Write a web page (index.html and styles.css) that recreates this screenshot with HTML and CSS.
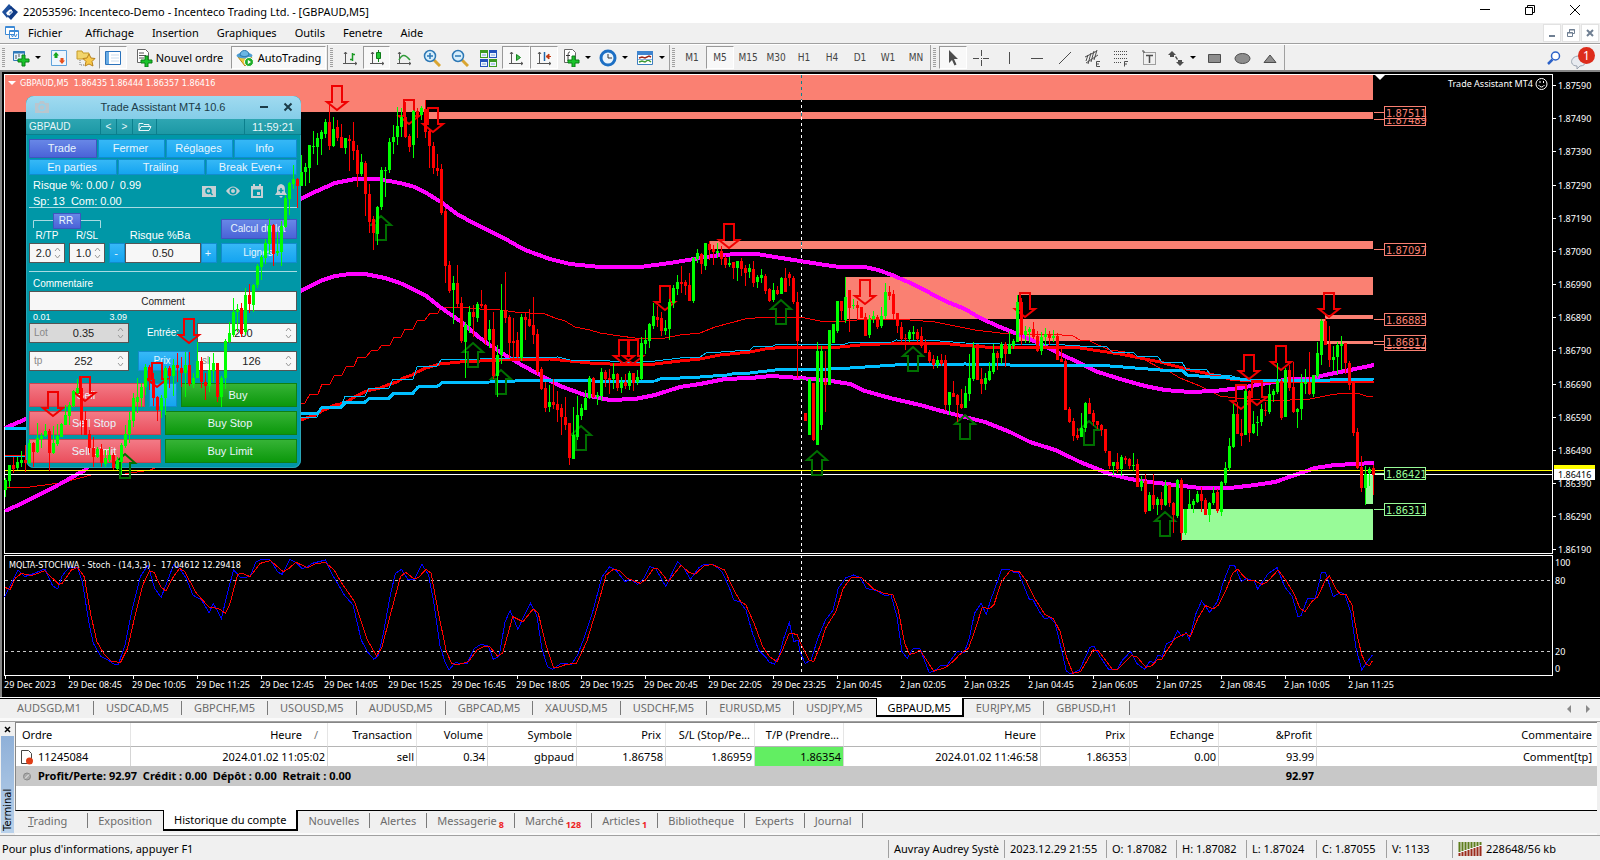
FILE: index.html
```html
<!DOCTYPE html>
<html lang="fr">
<head>
<meta charset="utf-8">
<title>22053596: Incenteco-Demo - Incenteco Trading Ltd. - [GBPAUD,M5]</title>
<link rel="stylesheet" href="styles.css">
</head>
<body>
<header class="titlebar">
  <svg class="app-logo" width="16" height="16" viewBox="0 0 16 16"><path d="M0 8 7 0l3 3-6 6 2 3-1 2z" fill="#1d4f9c"/><path d="M9 2l7 6-7 8-4-4 5-5-3-2z" fill="#0f3a85"/><path d="M5 9l4-4 2 3-4 4z" fill="#fff"/><path d="M7 9l2-2 1 1-2 2z" fill="#5f8cc9"/></svg>
  <h1 class="window-title">22053596: Incenteco-Demo - Incenteco Trading Ltd. - [GBPAUD,M5]</h1>
  <div class="window-controls">
    <button type="button" aria-label="Minimize"><svg width="12" height="12" viewBox="0 0 12 12"><path d="M1 5.500H11" stroke="#000"/></svg></button>
    <button type="button" aria-label="Restore"><svg width="12" height="12" viewBox="0 0 12 12" fill="none" stroke="#000"><path d="M1.500 3.500h7v7h-7zM3.500 3.500v-2h7v7h-2"/></svg></button>
    <button type="button" aria-label="Close"><svg width="12" height="12" viewBox="0 0 12 12" fill="none" stroke="#000"><path d="M1 1l10 10M11 1 1 11"/></svg></button>
  </div>
</header>
<nav class="menubar" aria-label="Menu">
  <svg width="16" height="16" viewBox="0 0 16 16" fill="#fff" stroke="#3d8ad6"><path d="M1.500 1.500h9v8h-9zM5.500 5.500h9v8h-9z"/><path d="M1 2.500h9M5 6.500h9M7 9l1.500 3 1.500-3 1.500 3 1.500-3" fill="none"/></svg>
  <button type="button" class="menu-item first">Fichier</button>
  <button type="button" class="menu-item">Affichage</button>
  <button type="button" class="menu-item">Insertion</button>
  <button type="button" class="menu-item">Graphiques</button>
  <button type="button" class="menu-item">Outils</button>
  <button type="button" class="menu-item">Fenetre</button>
  <button type="button" class="menu-item">Aide</button>
  <div class="mdi-controls">
    <button type="button" aria-label="Minimize chart"><svg width="10" height="10" viewBox="0 0 10 10"><path d="M2 7h6v2H2z" fill="#6f7f92"/></svg></button>
    <button type="button" aria-label="Restore chart"><svg width="10" height="10" viewBox="0 0 10 10" fill="none" stroke="#6f7f92"><path d="M1.500 4.500h5v4h-5zM3.500 4V1.500h5v4H7M3 2h6M1 5h6"/></svg></button>
    <button type="button" aria-label="Close chart"><svg width="10" height="10" viewBox="0 0 10 10"><path d="M2 2l6 6M8 2 2 8" stroke="#6f7f92" stroke-width="2"/></svg></button>
  </div>
</nav>
<div class="toolbar">
  <div class="tool-group">
    <span class="grip"></span>
    <button type="button" class="tool drop" aria-label="New chart"><svg width="18" height="18" viewBox="0 0 18 18"><path d="M1.500 2.500h11v9h-11z" fill="#e4f1fc" stroke="#2f78b8"/><path d="M1 3.500h12" stroke="#2f78b8" stroke-width="2"/><path d="M4 6v4M7 5v3" stroke="#555"/><path d="M10 6h3v4h4v3h-4v4h-3v-4H6v-3h4z" fill="#19c42a" stroke="#0a7d16"/></svg><i class="caret"></i></button>
    <button type="button" class="tool" aria-label="Market watch"><svg width="18" height="18" viewBox="0 0 18 18"><path d="M1.500 1.500h15v15h-15z" fill="#eef6fd" stroke="#5da2dc"/><path d="M6 3l3 3.500H7.500V9h-3V6.500H3z" fill="#14a81e"/><path d="M12 15l-3-3.500h1.500V9h3v2.500H15z" fill="#e8501c"/></svg></button>
    <button type="button" class="tool" aria-label="Navigator"><svg width="20" height="18" viewBox="0 0 20 18"><path d="M1 2h5l1 2h6v6H1z" fill="#f2d56b" stroke="#c59a28"/><path d="M4 11v5h4" fill="none" stroke="#777" stroke-dasharray="1 1"/><path d="M13 5l2 4 4 .5-3 3 1 4.500-4-2-4 2 1-4.500-3-3 4-.5z" fill="#f8c94a" stroke="#b8821d"/></svg></button>
    <button type="button" class="tool wide pressed" aria-label="Terminal"><svg width="18" height="18" viewBox="0 0 18 18"><path d="M1.500 2.500h15v13h-15z" fill="#fff" stroke="#2a72bb"/><path d="M2 3h3v12H2z" fill="#68abe3"/><path d="M7 6h8M7 9h8M7 12h8" stroke="#c9dced"/></svg></button>
    <button type="button" class="tool order"><svg width="18" height="18" viewBox="0 0 18 18"><path d="M2.500.5h8l3 3v10h-11z" fill="#fff" stroke="#666"/><path d="M4 4h5M4 6.500h7M4 9h5" stroke="#555"/><path d="M10 7h3v4h4v3h-4v4h-3v-4H6v-3h4z" fill="#19c42a" stroke="#0a7d16"/></svg>Nouvel ordre</button>
    <button type="button" class="tool auto pressed"><svg width="18" height="18" viewBox="0 0 18 18"><path d="M2 8l7 9 7-9z" fill="#f0c83e" stroke="#b98b16"/><ellipse cx="8.500" cy="6.500" rx="8" ry="3" fill="#4f9ed3"/><path d="M4 6c0-6 9-6 9 0-2 2-7 2-9 0z" fill="#6bb6e4" stroke="#2a75ab"/><circle cx="13" cy="13" r="4.500" fill="#1fae2a" stroke="#fff"/><path d="M11.800 10.800v4.500l3.200-2.300z" fill="#fff"/></svg>AutoTrading</button>
  </div>
  <div class="tool-group charts">
    <span class="grip"></span>
    <button type="button" class="tool" aria-label="Bar chart"><svg width="18" height="18" viewBox="0 0 18 18" fill="none"><path d="M4.500 3v12M2 14.500h14M3 5l1.500-2L6 5M14 13l2 1.500-2 1.500" stroke="#555"/><path d="M11.500 4v8M9 10.500h2M12 5.500h2" stroke="#1b9a25" stroke-width="1.500"/></svg></button>
    <button type="button" class="tool pressed" aria-label="Candlesticks"><svg width="18" height="18" viewBox="0 0 18 18" fill="none"><path d="M4.500 3v12M2 14.500h14M3 5l1.500-2L6 5M14 13l2 1.500-2 1.500" stroke="#555"/><path d="M10.500 1v12" stroke="#0f7c19"/><path d="M8.500 3.500h4v6h-4z" fill="#22c932" stroke="#0f7c19"/></svg></button>
    <button type="button" class="tool wide" aria-label="Line chart"><svg width="18" height="18" viewBox="0 0 18 18" fill="none"><path d="M4.500 3v12M2 14.500h14M3 5l1.500-2L6 5M14 13l2 1.500-2 1.500" stroke="#555"/><path d="M4 11c3-6 6-6 11 0" stroke="#2f9b38" stroke-width="1.500"/></svg></button>
    <button type="button" class="tool wide" aria-label="Zoom in"><svg width="18" height="18" viewBox="0 0 18 18"><path d="M11 11l6 6" stroke="#d9a531" stroke-width="3"/><circle cx="7" cy="7" r="5.500" fill="#d8effc" stroke="#2d78b5" stroke-width="1.500"/><path d="M7 4v6M4 7h6" stroke="#2d78b5" stroke-width="1.500"/></svg></button>
    <button type="button" class="tool wide" aria-label="Zoom out"><svg width="18" height="18" viewBox="0 0 18 18"><path d="M11 11l6 6" stroke="#d9a531" stroke-width="3"/><circle cx="7" cy="7" r="5.500" fill="#d8effc" stroke="#2d78b5" stroke-width="1.500"/><path d="M4 7h6" stroke="#2d78b5" stroke-width="1.500"/></svg></button>
    <button type="button" class="tool wide" aria-label="Tile windows"><svg width="18" height="18" viewBox="0 0 18 18"><path d="M1 1h8v8H1zM10 10h8v8h-8z" fill="#3c9a20"/><path d="M10 1h8v8h-8zM1 10h8v8H1z" fill="#2353bd"/><path d="M2 4h6v4H2zM11 4h6v4h-6zM2 13h6v4H2zM11 13h6v4h-6z" fill="#eef4fb"/><path d="M3 6h4M12 6h4M3 15h4M12 15h4" stroke="#7ba0d6"/></svg></button>
    <button type="button" class="tool wide pressed" aria-label="Auto scroll"><svg width="18" height="18" viewBox="0 0 18 18" fill="none"><path d="M4.500 3v12M2 14.500h14M3 5l1.500-2L6 5M14 13l2 1.500-2 1.500" stroke="#555"/><path d="M9.500 5.500v6l4-3z" fill="#45c251" stroke="#16821f"/></svg></button>
    <button type="button" class="tool wide pressed" aria-label="Chart shift"><svg width="18" height="18" viewBox="0 0 18 18" fill="none"><path d="M4.500 3v12M2 14.500h14M3 5l1.500-2L6 5M14 13l2 1.500-2 1.500" stroke="#555"/><path d="M9.500 3v9" stroke="#1f66a8" stroke-width="1.500"/><path d="M16 7.500h-4M14 5l-3 2.500 3 2.500z" stroke="#c23a12" fill="#c23a12"/></svg></button>
    <button type="button" class="tool drop" aria-label="Indicators"><svg width="18" height="18" viewBox="0 0 18 18"><path d="M2.500.5h8l3 3v10h-11z" fill="#fff" stroke="#666"/><path d="M8 3C6 3 6 4 6 12M4 6.500h4" fill="none" stroke="#333"/><path d="M10 7h3v4h4v3h-4v4h-3v-4H6v-3h4z" fill="#19c42a" stroke="#0a7d16"/></svg><i class="caret"></i></button>
    <button type="button" class="tool drop" aria-label="Periods"><svg width="18" height="18" viewBox="0 0 18 18"><circle cx="9" cy="9" r="7" fill="#eaf4fc" stroke="#1c6fc4" stroke-width="3"/><path d="M9 5v4h4" fill="none" stroke="#333"/></svg><i class="caret"></i></button>
    <button type="button" class="tool drop" aria-label="Templates"><svg width="18" height="18" viewBox="0 0 18 18"><path d="M1.500 2.500h15v13h-15z" fill="#fff" stroke="#3e7fc0"/><path d="M1 2h16v4H1z" fill="#3e84cf"/><path d="M3 9l3-1 3 1 4-2 2 1" fill="none" stroke="#9c2516" stroke-width="1.500"/><path d="M3 13l3-1 3 1 3-2 3 2" fill="none" stroke="#3b9a36" stroke-width="1.500"/><path d="M2 10.500h14" stroke="#8ab2dc"/></svg><i class="caret"></i></button>
  </div>
  <div class="tool-group periods">
    <span class="grip"></span>
    <button type="button" class="tool wide">M1</button><button type="button" class="tool wide pressed">M5</button><button type="button" class="tool wide">M15</button><button type="button" class="tool wide">M30</button><button type="button" class="tool wide">H1</button><button type="button" class="tool wide">H4</button><button type="button" class="tool wide">D1</button><button type="button" class="tool wide">W1</button><button type="button" class="tool wide">MN</button>
  </div>
  <div class="tool-group drawing">
    <span class="grip"></span>
    <button type="button" class="tool wide pressed" aria-label="Cursor"><svg width="18" height="18" viewBox="0 0 18 18"><path d="M5 1v13l3-3 2.500 5.500 2-1L10 10h4z" fill="#4d4d4d"/></svg></button>
    <button type="button" class="tool wide" aria-label="Crosshair"><svg width="18" height="18" viewBox="0 0 18 18"><path d="M9.500 1v6M9.500 11v6M1 9.500h6M11 9.500h6M9 9.500h1" stroke="#4d4d4d"/></svg></button>
    <button type="button" class="tool wide" aria-label="Vertical line"><svg width="18" height="18" viewBox="0 0 18 18"><path d="M9.500 3v12" stroke="#4d4d4d"/></svg></button>
    <button type="button" class="tool wide" aria-label="Horizontal line"><svg width="18" height="18" viewBox="0 0 18 18"><path d="M3 9.500h12" stroke="#4d4d4d"/></svg></button>
    <button type="button" class="tool wide" aria-label="Trendline"><svg width="18" height="18" viewBox="0 0 18 18"><path d="M3 15 15 3" stroke="#4d4d4d"/></svg></button>
    <button type="button" class="tool wide" aria-label="Equidistant channel"><svg width="18" height="18" viewBox="0 0 18 18" fill="none" stroke="#4d4d4d"><path d="M1 8 13 2M2 14l12-8M4 15 7 4M7 13l3-11M10 11l3-10M2 12l2-6"/><path d="M16 12.500h-3.500v5H16M12.500 15H15"/></svg></button>
    <button type="button" class="tool wide" aria-label="Fibonacci"><svg width="18" height="18" viewBox="0 0 18 18" fill="none" stroke="#4d4d4d"><path d="M2 2.500h13M2 5.500h13M2 9.500h13M2 13.500h8" stroke-dasharray="1 1"/><path d="M16 12.500h-3.500v5M12.500 15H15"/></svg></button>
    <button type="button" class="tool wide" aria-label="Text label"><svg width="18" height="18" viewBox="0 0 18 18" fill="none" stroke="#4d4d4d"><path d="M3.500 3.500h12v12h-12z" stroke-dasharray="1 1"/><path d="M6 6.500h7M9.500 6v8" stroke-width="1.500"/><path d="M2 2h2v2" /></svg></button>
    <button type="button" class="tool drop" aria-label="Arrows"><svg width="18" height="18" viewBox="0 0 18 18" fill="#4d4d4d"><path d="M5 2l4 4H7v2H3V6H1zM13 17l-4-4h2v-2h4v2h2zM8 8l1-1 2 3-1 1z"/></svg><i class="caret"></i></button>
    <button type="button" class="tool wide" aria-label="Rectangle"><svg width="18" height="18" viewBox="0 0 18 18"><path d="M3.500 5.500h12v8h-12z" fill="#8d8d8d" stroke="#4d4d4d"/></svg></button>
    <button type="button" class="tool wide" aria-label="Ellipse"><svg width="18" height="18" viewBox="0 0 18 18"><ellipse cx="9.500" cy="9.500" rx="7.500" ry="5" fill="#8d8d8d" stroke="#4d4d4d"/></svg></button>
    <button type="button" class="tool wide" aria-label="Triangle"><svg width="18" height="18" viewBox="0 0 18 18"><path d="M3 13.500 9 6l6 7.500z" fill="#8d8d8d" stroke="#4d4d4d"/></svg></button>
  </div>
  <div class="tool-right">
    <button type="button" aria-label="Search"><svg width="16" height="16" viewBox="0 0 16 16" fill="none"><path d="M6.500 9.500 2 14" stroke="#2c62c8" stroke-width="2.500"/><circle cx="9.500" cy="6" r="4" fill="#fff" stroke="#2c62c8" stroke-width="1.500"/></svg></button>
    <button type="button" class="notify" aria-label="Notifications"><svg width="16" height="14" viewBox="0 0 16 14"><path d="M8 1c9 0 9 10 1 10l-3 3v-3C-2 11-1 1 8 1z" fill="#e8ebf0" stroke="#9aa3b0"/></svg><span class="badge">1</span></button>
  </div>
</div>

<main class="chart">
  <svg class="chart-layer" viewBox="0 70 1600 628" preserveAspectRatio="xMinYMin meet" role="img" aria-label="GBPAUD M5">
    <path d="M0 70H1600V72H2V698H0z" fill="#868686"/>
    <g fill="#fa8072" shape-rendering="crispEdges">
      <path d="M5 75H1373V100H425V112H5zM428 112H1373v7H428zM709 241H1373v8H709zM845 277H1373v18H1018v24H845zM1018 319H1325v22H1018zM1325 315h48v4h-48zM1325 341h48v3h-48z"/>
      <path d="M1182 509h191v31h-191zM1366 474h7v30h-7z" fill="#98fb98"/>
    </g>
    <g stroke-width="1" fill="none" shape-rendering="crispEdges">
      <path d="M801.500 75V674" stroke="#fff" stroke-dasharray="3 3"/>
      <path d="M801.500 75V100M801.500 113V119M801.500 242V249" stroke="#057f8d" stroke-dasharray="3 3"/>
      <path d="M5 580.500H1552M5 651.500H1552" stroke="#c8c8c8" stroke-dasharray="3 3"/>
      <path d="M4.500 553V74.500H1552.500V553.500H4.500zM4.500 555.500H1552.500V675.500H4.500z" stroke="#fff"/>
    </g>
    <g class="averages">
      <polyline class="thin red" points="5,488 30,487 60,483 80,478 91,475 125,474 150,470 200,450 301,403 305,403 310,394 318,394 322,384 330,384 334,376 342,375 346,367 354,366 358,357 366,357 371,351 378,350 382,345 390,345 394,337 401,337 405,329 413,329 417,321 425,320 430,313 438,313 441,307 460,307 480,309 500,310 515,312 545,314 555,318 565,321 575,327 590,330 600,333 620,336 635,338 665,338 680,335 700,333 715,327 730,323 745,319 765,317 800,317 820,321 845,321 870,319 910,320 935,322 955,326 975,330 1000,333 1020,334 1050,334 1073,336 1080,340 1090,341 1098,345 1110,350 1125,352 1135,356 1145,360 1160,368 1170,372 1180,378 1190,382 1200,386 1210,391 1220,396 1235,398 1260,400 1290,400 1310,399 1330,395 1345,393 1360,394 1366,396 1373,396"/>
      <polyline class="magenta" points="5,428 26,419 150,300 301,199 308,195 335,183 355,179 378,179 400,183 415,187 428,194 441,202 457,214 475,224 500,236 525,250 550,259 570,264 600,267 640,267 670,263 700,258 720,255 740,254 757,254 775,257 800,261 825,265 840,267 865,267 878,270 892,275 915,285 945,301 965,309 980,318 1000,327 1020,335 1043,345 1060,354 1080,363 1095,371 1120,379 1145,386 1165,390 1190,392 1215,391 1240,388 1262,384 1290,379 1310,379 1325,375 1350,370 1374,365"/>
      <polyline class="magenta" points="5,511 25,502 60,484 85,470 200,360 301,291 320,281 335,276 350,274 365,274 385,278 400,283 425,295 440,307 460,321 480,338 500,352 520,364 540,375 560,386 585,395 610,400 635,399 655,395 680,387 700,384 725,379 750,378 772,376 800,378 825,380 850,384 865,391 890,398 920,405 945,412 965,417 985,422 1010,432 1030,442 1055,450 1070,457 1080,462 1095,468 1110,474 1130,479 1150,482 1175,485 1200,488 1230,488 1255,485 1275,482 1295,475 1315,468 1335,465 1374,463"/>
      <polyline class="thin red" points="5,455 26,455"/>
      <polyline class="thin cyan" points="5,456 26,456"/>
      <polyline class="thick red" points="301,420 306,418 316,415 322,411 335,405 345,403 356,396 367,391 380,388 390,384 397,382 403,378 412,375 417,372 426,368 440,364 460,362 500,360 550,359 570,361 590,363 630,365 655,364 680,361 700,359 720,355 750,352 765,349 785,347 840,347 860,345 900,343 940,343 960,345 985,347 1020,347 1050,347 1080,348 1100,351 1120,354 1145,359 1160,362 1175,366 1190,370 1210,374 1230,379 1250,381 1300,382 1374,382"/>
      <polyline class="thick cyan" points="5,428 26,428 200,420 301,413 318,413 322,407 341,407 346,402 365,402 370,398 389,398 394,393 413,393 418,387 438,386 442,383 490,382 540,380 585,380 600,382 655,381 660,379 680,378 700,377 727,375 732,374 750,373 775,370 830,369 850,368 895,365 965,364 1010,365 1080,365 1110,366 1135,368 1160,370 1183,371 1187,375 1210,377 1230,378 1250,380 1330,380 1374,379"/>
      <polyline class="thin cyan" points="301,417 317,417 321,407 341,407 345,396 365,396 369,388 389,388 393,379 413,379 417,367 437,366 441,360 480,359 510,358 558,357 570,360 610,361 630,363 655,361 680,358 700,357 706,353 750,350 754,346 773,346 777,344 845,344 848,343 892,342 896,340 940,341 965,343 1000,344 1050,344 1080,346 1107,347 1112,352 1133,352 1137,356 1158,357 1162,362 1182,362 1186,369 1206,369 1210,374 1232,376 1240,379 1300,380"/>
    </g>
    <g shape-rendering="crispEdges"><path d="M5 470.500H1552" stroke="#ff0"/><path d="M5 474.500H1552" stroke="#fff"/></g>
    <g class="stochastic" transform="translate(0 545) scale(.5102 .3333)">
      <polyline stroke="#00f" points="9,155 35,75 48,95 62,88 75,80 88,72 103,122 113,132 122,92 135,68 152,68 162,115 175,240 183,295 198,335 212,345 222,357 232,358 245,300 258,200 275,95 290,60 303,130 316,157 340,60 352,70 365,100 378,150 395,165 410,203 418,175 434,220 448,130 458,75 472,98 490,95 502,50 513,43 530,45 545,82 553,88 568,43 580,52 592,70 600,68 612,55 638,45 650,85 675,150 692,180 708,285 720,320 733,343 742,330 752,260 765,150 775,85 787,73 800,105 812,103 827,58 840,90 850,170 862,300 872,350 880,375 892,353 915,357 930,310 943,298 957,303 967,343 978,335 990,230 1000,197 1015,253 1028,210 1040,175 1052,210 1062,310 1073,365 1083,373 1100,355 1120,358 1132,330 1142,290 1160,210 1180,95 1195,65 1208,77 1225,110 1235,103 1250,118 1262,100 1273,65 1285,70 1305,125 1328,50 1340,68 1353,103 1370,68 1380,58 1400,60 1415,80 1430,130 1438,165 1450,170 1462,195 1475,265 1487,315 1500,335 1508,352 1518,357 1528,330 1535,285 1547,232 1556,290 1564,285 1568,320 1578,355 1590,345 1603,280 1618,225 1633,195 1643,130 1658,98 1673,90 1686,98 1698,130 1718,137 1736,153 1746,148 1758,215 1768,320 1778,340 1790,310 1803,310 1813,350 1821,382 1830,380 1843,363 1855,363 1876,320 1890,322 1900,280 1910,205 1923,175 1933,208 1943,160 1963,75 1978,73 1988,83 1996,82 2018,165 2025,165 2036,197 2048,222 2058,217 2068,235 2080,310 2090,378 2098,387 2116,375 2136,308 2144,303 2156,335 2173,373 2190,373 2200,345 2216,320 2228,355 2243,373 2253,350 2263,352 2270,330 2278,335 2286,297 2298,288 2308,258 2318,275 2325,262 2331,285 2343,210 2355,168 2371,202 2386,170 2398,110 2411,60 2420,62 2433,110 2443,100 2458,108 2465,132 2486,85 2503,68 2518,125 2533,155 2544,215 2550,212 2563,160 2578,160 2590,83 2598,82 2613,155 2628,143 2636,148 2648,205 2658,310 2669,375 2680,350 2690,330"/>
      <polyline stroke="#f00" points="9,127 20,133 30,100 42,85 62,92 88,77 115,118 122,115 140,75 152,67 165,95 178,210 190,290 203,325 218,348 236,353 250,310 262,230 280,120 293,78 302,82 315,125 325,138 340,95 352,70 362,80 385,145 410,187 428,190 442,205 450,180 466,88 475,85 490,95 510,55 530,47 540,60 555,80 565,72 580,52 603,68 620,55 638,53 655,75 670,115 695,170 720,285 738,332 748,310 765,210 785,95 795,82 812,102 820,98 835,73 845,85 860,210 875,320 885,355 895,360 918,350 935,315 950,303 960,305 975,333 985,325 1005,215 1025,230 1045,192 1055,205 1070,300 1085,368 1092,368 1110,358 1130,355 1150,290 1170,190 1188,90 1203,72 1215,78 1230,100 1255,115 1265,105 1280,72 1290,72 1310,110 1335,60 1350,82 1362,88 1380,63 1395,58 1420,75 1440,140 1452,170 1462,180 1478,235 1495,305 1508,335 1523,350 1535,310 1547,265 1562,268 1568,290 1586,345 1595,350 1608,300 1618,250 1638,200 1653,130 1668,98 1688,97 1713,133 1733,145 1750,150 1760,190 1773,295 1783,328 1793,325 1803,315 1816,345 1830,378 1853,368 1868,350 1880,330 1898,310 1908,270 1925,188 1940,190 1948,180 1963,110 1980,77 1998,80 2008,100 2028,160 2048,208 2065,222 2078,260 2090,335 2103,385 2118,380 2143,315 2153,317 2180,372 2190,374 2218,332 2228,335 2246,367 2258,362 2268,345 2276,345 2288,315 2303,280 2325,265 2333,275 2348,220 2363,182 2378,192 2388,180 2403,135 2416,85 2426,72 2435,90 2448,107 2458,107 2473,118 2483,112 2505,75 2520,105 2536,145 2548,190 2558,200 2571,170 2583,155 2598,105 2606,93 2618,130 2628,150 2638,148 2650,180 2660,270 2669,330 2678,358 2684,362 2690,348"/>
    </g>
    <path d="M8 81h8l-4 4z" fill="#fff"/><path d="M1375 75h10l-5 5z" fill="#fff"/>
    <text class="chart-text caption" x="20" y="86" xml:space="preserve">GBPAUD,M5  1.86435 1.86444 1.86357 1.86416</text>
    <text class="chart-text" x="1448" y="87">Trade Assistant MT4</text>
    <g fill="none" stroke="#fff"><circle cx="1541.500" cy="84" r="5.500"/><path d="M1538.500 85q3 4 6 0M1540 81v2M1543.500 81v2"/></g>
    <text class="chart-text caption" x="9" y="568" xml:space="preserve">MQLTA-STOCHWA - Stoch - (14,3,3) -  17.04612 12.29418</text>
    <g id="axes"></g>
  </svg>

  <section class="panel" aria-label="Trade Assistant MT4 10.6">
    <div class="panel-title">
      <svg width="14" height="12" viewBox="0 0 14 12"><path d="M0 2h4l1-2h4l1 2h4v10H0z" fill="#b9c6ce"/><circle cx="7" cy="6.500" r="3" fill="none" stroke="#93d3ec" stroke-width="1.500"/></svg>
      <h2>Trade Assistant MT4 10.6</h2>
      <button type="button" aria-label="Réduire"><svg width="10" height="10" viewBox="0 0 10 10"><path d="M1 5h8" stroke="#1c3c48" stroke-width="2"/></svg></button>
      <button type="button" aria-label="Fermer le panneau"><svg width="10" height="10" viewBox="0 0 10 10"><path d="M1.500 1.500l7 7M8.500 1.500l-7 7" stroke="#1c3c48" stroke-width="2"/></svg></button>
    </div>
    <div class="symbol-bar">
      <select class="bar-cell symbol" aria-label="Symbole"><option>GBPAUD</option></select>
      <button type="button" class="bar-cell">&lt;</button>
      <button type="button" class="bar-cell">&gt;</button>
      <button type="button" class="bar-cell folder" aria-label="Ouvrir"><svg width="14" height="10" viewBox="0 0 14 10" fill="none" stroke="#e8f6f8"><path d="M1 8.500v-7h4l1 1h5v2M1 8.500l2-4h10l-2 4z"/></svg></button>
      <span class="bar-cell blank"></span>
      <time class="bar-cell clock">11:59:21</time>
    </div>
    <div class="panel-body">
      <div class="tabs-main">
        <button type="button" class="btn active">Trade</button><button type="button" class="btn">Fermer</button><button type="button" class="btn">Réglages</button><button type="button" class="btn">Info</button>
      </div>
      <div class="tabs-sub">
        <button type="button" class="btn">En parties</button><button type="button" class="btn">Trailing</button><button type="button" class="btn">Break Even+</button>
      </div>
      <div class="info">
        <p>Risque %: 0.00 /&nbsp; 0.99<br>Sp: 13&nbsp; Com: 0.00</p>
        <div class="info-icons">
          <svg width="14" height="14" viewBox="0 0 14 14"><path d="M0 2h14v11H0z" fill="#c6d0d4"/><circle cx="6.500" cy="7" r="2.500" fill="none" stroke="#0097a7" stroke-width="1.500"/><path d="M8.500 9l2 2" stroke="#0097a7" stroke-width="1.500"/></svg>
          <svg width="14" height="14" viewBox="0 0 14 14"><path d="M0 7q7-9 14 0-7 9-14 0z" fill="#c6d0d4"/><circle cx="7" cy="7" r="3.500" fill="#0097a7"/><circle cx="7" cy="7" r="2" fill="#c6d0d4"/></svg>
          <svg width="14" height="14" viewBox="0 0 14 14"><path d="M1 2h2V0h2v2h4V0h2v2h2v12H1z" fill="#c6d0d4"/><path d="M3 5.500h8V12H3z" fill="#0097a7"/><path d="M7 8h3v3H7z" fill="#c6d0d4"/></svg>
          <svg width="14" height="14" viewBox="0 0 14 14"><path d="M7 0c4 1 4 3 4 8l2 3H1l2-3c0-5 0-7 4-8zM5 12h4l-2 2z" fill="#c6d0d4"/><path d="M7 4v5M4.500 6.500h5" stroke="#0097a7" stroke-width="1.500"/></svg>
        </div>
      </div>
      <div class="risk">
        <div class="rr">
          <button type="button" class="btn active rr-btn">RR</button>
          <svg class="bracket" width="68" height="9" viewBox="0 0 68 9" fill="none" stroke="#a8dbe2"><path d="M.5 9V1.500H20M48 1.500h19.500V9"/></svg>
          <label for="rtp">R/TP</label><label for="rsl">R/SL</label>
          <div class="spin small"><input id="rtp" value="2.0"><svg width="7" height="12" viewBox="0 0 7 12"><path d="M1 4l2.500-3L6 4M1 8l2.500 3L6 8"/></svg></div>
          <div class="spin small"><input id="rsl" value="1.0"><svg width="7" height="12" viewBox="0 0 7 12"><path d="M1 4l2.500-3L6 4M1 8l2.500 3L6 8"/></svg></div>
        </div>
        <div class="risk-value">
          <label for="risk">Risque %Ba</label>
          <div class="stepper"><button type="button" class="btn">-</button><input id="risk" class="field" value="0.50"><button type="button" class="btn">+</button></div>
        </div>
        <div class="risk-actions"><button type="button" class="btn active">Calcul du lot</button><button type="button" class="btn">Lignes</button></div>
      </div>
      <label class="comment-label" for="comment">Commentaire</label>
      <input id="comment" class="field comment" value="Comment">
      <div class="lot-range"><span>0.01</span><span>3.09</span></div>
      <div class="entry-row">
        <div class="spin muted"><label for="lot">Lot</label><input id="lot" value="0.35"><svg width="7" height="12" viewBox="0 0 7 12"><path d="M1 4l2.500-3L6 4M1 8l2.500 3L6 8"/></svg></div>
        <label class="entry-label" for="entry">Entrée:</label>
        <div class="spin"><input id="entry" value="200"><svg width="7" height="12" viewBox="0 0 7 12"><path d="M1 4l2.500-3L6 4M1 8l2.500 3L6 8"/></svg></div>
      </div>
      <div class="entry-row second">
        <div class="spin"><label for="tp">tp</label><input id="tp" value="252"><svg width="7" height="12" viewBox="0 0 7 12"><path d="M1 4l2.500-3L6 4M1 8l2.500 3L6 8"/></svg></div>
        <button type="button" class="btn">Prix</button>
        <div class="spin"><label for="sl">sl</label><input id="sl" value="126"><svg width="7" height="12" viewBox="0 0 7 12"><path d="M1 4l2.500-3L6 4M1 8l2.500 3L6 8"/></svg></div>
      </div>
      <div class="orders top"><button type="button" class="btn sell">Sell</button><button type="button" class="btn" aria-label="Mode"></button><button type="button" class="btn buy">Buy</button></div>
      <div class="orders"><button type="button" class="btn sell">Sell Stop</button><button type="button" class="btn buy">Buy Stop</button></div>
      <div class="orders"><button type="button" class="btn sell">Sell Limit</button><button type="button" class="btn buy">Buy Limit</button></div>
    </div>
  </section>

  <svg class="chart-layer over" viewBox="0 70 1600 628" preserveAspectRatio="xMinYMin meet" aria-hidden="true">
    <g id="arrows" fill="none" stroke-width="2"></g>
    <g id="candles" shape-rendering="crispEdges"></g>
  </svg>
</main>

<nav class="chart-tabs" aria-label="Graphiques ouverts">
  <a href="#">AUDSGD,M1</a><a href="#">USDCAD,M5</a><a href="#">GBPCHF,M5</a><a href="#">USOUSD,M5</a><a href="#">AUDUSD,M5</a><a href="#">GBPCAD,M5</a><a href="#">XAUUSD,M5</a><a href="#">USDCHF,M5</a><a href="#">EURUSD,M5</a><a href="#" class="before">USDJPY,M5</a><a href="#" class="current">GBPAUD,M5</a><a href="#">EURJPY,M5</a><a href="#">GBPUSD,H1</a>
  <svg width="24" height="10" viewBox="0 0 24 10" fill="#8a8a8a"><path d="M4 1v8L0 5zM19 1v8l4-4z"/></svg>
</nav>

<section class="terminal">
  <aside class="terminal-side">
    <button type="button" aria-label="Fermer le terminal"><svg width="7" height="7" viewBox="0 0 7 7"><path d="M1 1l5 5M6 1 1 6" stroke="#000" stroke-width="1.500"/></svg></button>
    <div class="terminal-name">Terminal</div>
  </aside>
  <div class="terminal-main">
    <div class="table-area">
      <table>
        <colgroup><col class="c-order"><col class="c-time"><col class="c-std"><col class="c-vol"><col class="c-std"><col class="c-std"><col class="c-std"><col class="c-std"><col class="c-time"><col class="c-std"><col class="c-std"><col class="c-profit"><col></colgroup>
        <thead><tr><th class="left">Ordre</th><th>Heure<span class="sort">/</span></th><th>Transaction</th><th>Volume</th><th>Symbole</th><th>Prix</th><th>S/L (Stop/Pe...</th><th>T/P (Prendre...</th><th>Heure</th><th>Prix</th><th>Echange</th><th>&amp;Profit</th><th>Commentaire</th></tr></thead>
        <tbody>
          <tr><td class="left"><span class="order-id"><svg width="16" height="16" viewBox="0 0 16 16"><path d="M3.500 1.500h7l3 3v10h-10z" fill="#fff" stroke="#444"/><circle cx="11.500" cy="12" r="3.500" fill="#df3d16"/></svg>11245084</span></td><td>2024.01.02 11:05:02</td><td>sell</td><td>0.34</td><td>gbpaud</td><td>1.86758</td><td>1.86959</td><td class="hit">1.86354</td><td>2024.01.02 11:46:58</td><td>1.86353</td><td>0.00</td><td>93.99</td><td>Comment[tp]</td></tr>
          <tr class="summary"><td class="left" colspan="11"><span class="order-id"><svg width="16" height="16" viewBox="0 0 16 16"><circle cx="9" cy="8.500" r="3.500" fill="#aaa" stroke="#888"/><path d="M7 10.500l4-4" stroke="#eee"/></svg>Profit/Perte: 92.97&nbsp; Crédit : 0.00&nbsp; Dépôt : 0.00&nbsp; Retrait : 0.00</span></td><td>92.97</td><td></td></tr>
        </tbody>
      </table>
    </div>
    <nav class="terminal-tabs" aria-label="Terminal">
      <a href="#" class="first"><u>T</u>rading</a><a href="#" class="before">Exposition</a><a href="#" class="current">Historique du compte</a><a href="#">Nouvelles</a><a href="#">Alertes</a><a href="#">Messagerie<b>8</b></a><a href="#">Marché<b>128</b></a><a href="#">Articles<b>1</b></a><a href="#">Bibliotheque</a><a href="#">Experts</a><a href="#">Journal</a>
    </nav>
  </div>
</section>

<footer class="statusbar">
  <span class="hint">Pour plus d'informations, appuyer F1</span>
  <span class="cell profile">Auvray Audrey Systè</span><span class="cell date">2023.12.29 21:55</span><span class="cell">O: 1.87082</span><span class="cell">H: 1.87082</span><span class="cell">L: 1.87024</span><span class="cell">C: 1.87055</span><span class="cell vol">V: 1133</span>
  <span class="cell net"><svg width="24" height="14" viewBox="0 0 24 14"><path d="M1.500 0v10M4.500 0v9M7.500 0v8M10.500 0v7M13.500 0v6M16.500 0v5M19.500 0v4M22.500 0v3" stroke="#5d7d1c" stroke-width="2"/><path d="M1.500 11v3M4.500 10v4M7.500 9v5M10.500 8v6M13.500 7v7M16.500 6v8M19.500 5v9M22.500 4v10" stroke="#9c2b1c" stroke-width="2"/></svg>228648/56 kb</span>
</footer>
<script src="chart.js"></script>
</body>
</html>
```
FILE: styles.css
```css
* { box-sizing: border-box; }
html, body { height: 100%; }
body {
  margin: 0;
  display: flex;
  flex-direction: column;
  background: #f0f0f0;
  color: #000;
  font: 11px/16px "Noto Sans", "Open Sans", sans-serif;
  overflow: hidden;
}
h1, h2, p { margin: 0; font-size: inherit; font-weight: normal; }
button { font: inherit; color: inherit; background: none; border: 0; padding: 0; margin: 0; }
input, select { font: inherit; color: inherit; border: 0; padding: 0; margin: 0; min-width: 0; }
svg { display: block; flex: none; }
a { color: inherit; text-decoration: none; }

/* window title */
.titlebar { flex: none; height: 23px; display: flex; align-items: center; background: #fff; padding-left: 2px; }
.window-title { margin-left: 5px; flex: 1; }
.window-controls { display: flex; padding-right: 3px; padding-bottom: 3px; }
.window-controls button { width: 45px; display: flex; justify-content: center; }

/* menu */
.menubar { flex: none; height: 21px; display: flex; align-items: center; border-bottom: 1px solid #a0a0a0; padding-left: 4px; }
.menu-item { padding: 0 9px; }
.menu-item.first { padding: 0 14px 0 8px; }
.mdi-controls { margin-left: auto; display: flex; gap: 1px; padding-right: 1px; }
.mdi-controls button { width: 18px; height: 18px; background: #fff; border: 1px solid #e2e2e2; display: flex; align-items: center; justify-content: center; }

/* toolbar */
.toolbar { flex: none; height: 26px; display: flex; background: #f0f0f0; border-top: 1px solid #fff; }
.tool-group { display: flex; align-items: center; border-right: 1px solid #a0a0a0; }
.grip { width: 3px; height: 20px; margin: 0 3px 0 2px; background: repeating-linear-gradient(#a0a0a0 0 1px, #f0f0f0 1px 2px); }
.tool { width: 27px; height: 23px; display: flex; align-items: center; justify-content: center; border: 1px solid transparent; }
.tool.wide { width: 28px; }
.tool.drop { width: 37px; gap: 5px; }
.tool.order { width: 104px; gap: 3px; }
.tool.auto { width: 95px; gap: 4px; margin-right: 1px; }
.tool.pressed { background: #f8f8f8; border-color: #999 #fff #fff #999; }
.caret { border: 3px solid transparent; border-top-color: #000; border-bottom: 0; }
.periods .tool { font: 10px/14px "DejaVu Sans Condensed", "DejaVu Sans", sans-serif; color: #444; }
.tool-right { margin-left: auto; display: flex; align-items: center; gap: 9px; padding-right: 5px; }
.notify { position: relative; width: 24px; height: 24px; padding-top: 8px; }
.badge { position: absolute; top: 1px; right: 0; width: 17px; height: 17px; border-radius: 50%; background: #dd2c1b; color: #fff; font-size: 12px; line-height: 17px; }

/* chart */
.chart { position: relative; flex: 1; min-height: 0; background: #000; overflow: hidden; border-bottom: 1px solid #fff; }
.chart-layer { width: 100%; height: auto; }
.chart-layer.over { position: absolute; inset: 0; pointer-events: none; }
.chart-text { font: 9px "Noto Sans", sans-serif; fill: #fff; }
.chart-text.caption { font-family: "DejaVu Sans Condensed", "Noto Sans", sans-serif; }
.tag-text { font: 11px "DejaVu Sans Condensed", "Noto Sans", sans-serif; }
.averages polyline { fill: none; shape-rendering: crispEdges; }
.averages .thin { stroke-width: 1; }
.averages .thick { stroke-width: 3; }
.averages .red { stroke: #f00; }
.averages .cyan { stroke: #00bfff; }
.averages .magenta { stroke: #f0f; stroke-width: 4; }
.stochastic polyline { fill: none; vector-effect: non-scaling-stroke; shape-rendering: crispEdges; }

/* trading panel */
.panel { position: absolute; left: 26px; top: 26px; width: 275px; padding-bottom: 5px; background: #0097a7; border-radius: 8px; color: #fff; font: 10px/12px "Liberation Sans", Arial, sans-serif; box-shadow: inset 0 0 0 1px #2aa5b6; overflow: hidden; }
.panel-title { height: 23px; display: flex; align-items: center; padding: 0 8px 1px 9px; gap: 14px; background: linear-gradient(#a0daf0, #84cde8); color: #1c3c48; font-size: 11px; }
.panel-title h2 { flex: 1; padding-left: 18px; text-align: center; }
.symbol-bar { height: 16px; display: grid; grid-template-columns: 74px 15px 15px 23px 1fr 56px; gap: 1px; background: #0b7f8d; padding-bottom: 1px; }
.bar-cell { background: linear-gradient(#2ea6b2, #1c98a5); color: #e8f6f8; display: flex; align-items: center; justify-content: center; }
.symbol { appearance: none; padding-left: 3px; }
.clock { font-size: 11px; }
.panel-body { padding: 4px 4px 0 3px; display: flex; flex-direction: column; }
.btn { background: linear-gradient(#36b8f6, #14a4f0); border: 1px solid #118ccd; color: #e8f5fc; text-align: center; white-space: nowrap; overflow: hidden; padding: 0 2px 1px 0; }
.btn.active { background: linear-gradient(#6887e6, #4a63d8); border-color: #3f55bd; }
.btn.sell { background: linear-gradient(#f37a86, #ea4f5d); border-color: #cb4451; font-size: 11px; }
.btn.buy { background: linear-gradient(#36b336, #0b980b); border-color: #118011; font-size: 11px; }
.tabs-main { display: grid; grid-template-columns: 68px 67px 67px 1fr; gap: 1px; height: 19px; font-size: 11px; }
.tabs-sub { display: grid; grid-template-columns: 88px 87px 1fr; gap: 1px; height: 16px; margin-top: 1px; font-size: 11px; }
.info { height: 33px; display: flex; justify-content: space-between; align-items: center; padding: 3px 9px 0 4px; border-bottom: 1px solid #a8dbe2; font-size: 11px; line-height: 16px; }
.info-icons { display: flex; gap: 10px; padding-bottom: 3px; }
.risk { display: flex; gap: 4px; height: 64px; border-bottom: 1px solid #a8dbe2; }
.rr { position: relative; display: grid; grid-template-columns: 36px 36px; grid-template-rows: 21px 14px 20px; column-gap: 4px; text-align: center; align-items: center; }
.rr-btn { grid-column: 1 / 3; justify-self: center; align-self: end; width: 28px; height: 16px; z-index: 1; }
.bracket { position: absolute; left: 4px; top: 11px; }
.spin { flex: none; width: 100px; height: 20px; display: flex; align-items: center; padding: 0 4px; background: #f7f7f7; border: 1px solid #555; color: #222; font-size: 11px; }
.spin.small { width: 36px; padding: 0 3px; }
.spin.muted { background: #d9d9d9; }
.spin label { width: 16px; color: #888; font-size: 10px; }
.spin input { flex: 1; width: 0; text-align: center; background: none; }
.spin svg { fill: none; stroke: #999; }
.risk-value { width: 108px; display: flex; flex-direction: column; padding-top: 21px; text-align: center; font-size: 11px; }
.risk-value label { height: 14px; padding-right: 6px; }
.stepper { display: grid; grid-template-columns: 16px 1fr 16px; height: 20px; }
.field { width: 100%; background: #f7f7f7; border: 1px solid #555; color: #222; text-align: center; font-size: 11px; }
.risk-actions { flex: 1; display: flex; flex-direction: column; gap: 4px; padding-top: 11px; }
.risk-actions .btn { height: 20px; }
.comment-label { padding: 6px 4px 2px; height: 19px; }
.field.comment { height: 20px; font-size: 10px; }
.lot-range { height: 12px; width: 98px; padding-left: 4px; display: flex; justify-content: space-between; font-size: 9px; }
.entry-row { display: flex; justify-content: space-between; align-items: center; }
.entry-row.second { margin-top: 8px; }
.entry-row .btn { width: 51px; height: 20px; }
.orders { display: grid; grid-template-columns: 1fr 1fr; gap: 4px; margin-top: 4px; height: 24px; }
.orders.top { grid-template-columns: 1fr 28px 1fr; margin-top: 12px; }

/* chart tabs */
.chart-tabs { flex: none; height: 24px; display: flex; align-items: flex-start; padding: 0 9px 0 5px; color: #6c6c6c; box-shadow: inset 0 1px #000, inset 0 -1px #a0a0a0, inset 0 -4px #fafafa; background: #f0f0f0; }
.chart-tabs a { height: 14px; margin-top: 3px; padding: 0 12px; line-height: 14px; border-right: 1px solid #7a7a7a; }
.chart-tabs a.before { border-right-color: transparent; }
.chart-tabs a.current, .terminal-tabs a.current { background: #fff; color: #000; border: 1px solid #000; border-width: 0 2px 2px 1px; }
.chart-tabs a.current { margin-top: 0; height: 19px; line-height: 19px; padding: 0 11px; }
.chart-tabs svg { margin: 6px 0 0 auto; }

/* terminal */
.terminal { flex: none; display: flex; height: 114px; border-bottom: 1px solid #a0a0a0; }
.terminal-side { width: 15px; display: flex; flex-direction: column; align-items: center; padding-bottom: 2px; }
.terminal-side button { height: 14px; }
.terminal-name { flex: 1; width: 13px; background: linear-gradient(#b9d1ea, #8fb0d8); writing-mode: vertical-rl; transform: rotate(180deg); font: 10px/13px "DejaVu Sans", sans-serif; padding-top: 2px; }
.terminal-main { flex: 1; min-width: 0; display: flex; flex-direction: column; padding-right: 3px; }
.table-area { flex: 1; background: #fff; border-top: 1px solid #868686; border-left: 1px solid #868686; border-bottom: 1px solid #000; }
table { width: 100%; table-layout: fixed; border-collapse: separate; border-spacing: 0; }
th, td { padding: 0 2px 0 0; font-weight: normal; text-align: right; white-space: nowrap; overflow: hidden; border-right: 1px solid #d5d5d5; }
th { height: 24px; padding-right: 4px; border-bottom: 1px solid #b5b5b5; border-right-color: #e5e5e5; }
td { height: 19px; }
th:last-child, td:last-child { border-right: 0; padding-right: 5px; }
.left { text-align: left; }
th.left { padding-left: 6px; }
.sort { color: #777; padding: 0 5px 0 12px; }
.order-id { display: flex; align-items: center; gap: 4px; padding-left: 2px; }
.hit { background: #62ee62; }
.summary td { height: 20px; background: #c8c8c8; border-right: 0; font-weight: bold; padding-right: 3px; }
.c-order { width: 115px; }
.c-time { width: 197px; }
.c-std { width: 89px; }
.c-vol { width: 71px; }
.c-profit { width: 98px; }
.terminal-tabs { height: 24px; display: flex; align-items: flex-start; color: #6c6c6c; box-shadow: inset 0 -2px #fafafa; }
.terminal-tabs a { height: 15px; line-height: 15px; margin-top: 2px; padding: 0 10px; border-right: 1px solid #7a7a7a; }
.terminal-tabs a.first { padding: 0 20px 0 13px; }
.terminal-tabs a.before { border-right-color: transparent; }
.terminal-tabs a.current { height: 21px; line-height: 19px; margin-top: -1px; }
.terminal-tabs b { margin-left: 2px; font-size: 9px; color: #e22; position: relative; top: 3px; }

/* status bar */
.statusbar { flex: none; height: 24px; display: flex; align-items: center; padding-top: 2px; }
.hint { flex: 1; padding-left: 2px; }
.cell { width: 70px; height: 18px; line-height: 18px; padding-left: 5px; border-left: 1px solid #a0a0a0; white-space: nowrap; overflow: hidden; }
.cell.profile { width: 116px; }
.cell.date { width: 102px; }
.cell.vol { width: 66px; }
.cell.net { width: 148px; display: flex; align-items: center; gap: 4px; }
```
FILE: chart.js
```js
// One candle per 4px step: direction, high, body top, body bottom, low.
const CANDLES = `
g478 480 490 497,g465 465 481 487,r457 465 469 473,g457 462 468 470,g451 460 463 467,r445 460 463 472,g440 443 463 464,r442 443 452 467,g423 438 452 453,g433 436 439 448,
g424 431 436 437,r429 431 453 471,g426 443 453 454,g424 436 444 446,g423 424 437 437,g405 415 425 425,g402 405 416 425,g390 391 406 407,g379 388 393 394,r376 388 420 435,
r411 420 435 435,r430 434 448 453,r437 448 457 467,g447 449 457 458,r444 449 463 467,g450 458 464 467,g447 455 460 462,r453 455 468 470,g457 460 469 470,g443 445 462 475,
g425 434 446 448,g412 420 434 443,g393 398 421 427,g378 397 402 413,g383 387 398 407,g364 367 387 395,r365 367 380 390,r373 379 398 406,r396 397 410 421,g395 398 410 418,
g366 368 398 415,r366 368 376 388,g359 365 376 396,r353 365 368 382,r357 368 373 387,g352 365 373 397,r352 365 384 386,g373 378 384 388,g342 361 378 378,r357 361 382 388,
r373 382 386 400,g357 370 386 392,g353 363 371 382,r363 363 397 402,g376 378 397 407,g339 341 378 389,g322 333 342 343,g298 312 335 337,g304 309 312 332,r303 308 334 337,
g288 295 332 335,r284 295 304 313,g284 285 305 312,g264 266 285 288,g255 257 267 280,g239 243 258 264,g219 225 244 254,r224 225 254 266,g232 251 253 256,g221 226 252 266,
g195 198 227 228,g182 183 199 215,g165 179 184 189,r178 179 186 208,g155 172 186 186,g163 167 172 186,g145 145 168 183,g131 146 147 154,g133 138 147 165,g130 132 139 155,
g119 122 134 138,r103 122 146 150,g117 129 146 147,r120 127 138 141,r124 137 148 148,g138 138 148 154,r135 139 141 171,r122 141 151 160,r145 150 174 187,g154 162 174 176,
r161 163 194 216,r184 194 222 233,r216 219 233 250,g206 207 234 245,g167 170 207 210,g167 170 171 197,g138 142 170 173,g125 137 142 154,g107 126 137 145,g108 117 127 137,
r102 117 137 138,r134 136 147 152,g110 111 145 158,r108 111 115 138,g106 108 115 120,r100 109 132 138,r130 131 146 168,r142 146 168 174,r154 168 171 176,r164 169 213 215,
r208 211 266 283,r261 265 291 293,g276 283 290 324,r265 283 304 308,r297 303 341 343,g322 325 342 378,g306 312 326 333,r305 312 317 337,g302 304 318 322,r290 304 306 308,
r304 305 340 345,g320 329 340 348,r312 329 376 379,g345 355 376 397,g284 310 355 364,r272 310 318 323,r315 317 343 358,r318 341 343 358,r332 340 357 360,g314 317 358 361,
r313 317 320 340,r309 319 326 327,r297 325 335 344,r329 334 372 375,r367 369 389 390,r382 388 408 412,g385 402 407 412,r379 402 405 409,r391 404 410 422,r404 408 417 435,
r397 417 425 430,r423 423 458 465,g407 435 459 459,g396 415 437 440,g404 408 416 420,g390 398 410 410,g376 378 398 399,r377 378 397 398,g392 395 397 405,g368 372 396 401,
r370 372 379 387,r369 378 380 394,g363 374 379 389,r373 374 388 391,g377 382 388 393,r374 382 386 389,g371 373 386 390,r373 373 383 391,g370 377 382 385,g337 343 379 380,
g330 340 344 354,g323 324 341 348,g303 316 326 329,r306 317 320 327,r312 318 331 336,g320 328 331 335,g299 302 329 340,g285 288 303 308,g275 282 289 295,r266 282 284 293,
r280 282 286 295,r273 285 301 301,g257 258 301 303,g249 253 259 263,r253 254 264 274,g243 243 266 270,r241 244 250 260,r245 249 252 265,g243 251 253 258,r246 251 259 265,
r255 258 265 268,g257 263 265 267,r262 262 268 279,g261 261 268 281,r258 261 269 276,r265 268 273 286,g264 268 272 278,r261 269 283 287,g275 277 282 288,g269 275 278 283,
r274 276 291 294,r288 289 301 302,g283 290 300 302,r286 290 294 295,g277 278 294 294,r268 278 292 292,r272 274 278 286,r276 278 302 304,r292 302 341 378,g379 379 380 380,
r413 413 421 421,g379 379 435 435,r383 383 440 441,g342 351 445 445,g346 351 425 430,r351 382 385 412,g330 330 385 385,g324 324 343 343,g301 301 331 333,r301 301 311 320,
g277 297 320 323,r290 290 308 332,g299 305 306 309,r301 305 308 319,r307 307 318 318,r313 317 336 336,g315 319 335 338,g311 316 319 323,r315 317 327 329,g307 316 326 328,
g283 292 316 319,r286 292 296 300,r290 294 314 319,r313 313 326 333,r322 327 339 342,r334 338 339 350,g330 332 339 342,g326 332 334 340,r329 332 339 342,r327 336 346 348,
r339 345 353 353,r350 352 361 363,r355 359 365 369,g356 360 365 368,r354 360 364 366,r355 360 405 411,g392 392 405 415,r381 393 397 397,r394 395 405 422,r389 404 408 409,
g386 393 408 408,g354 378 394 401,g342 348 379 381,r344 344 380 380,r368 379 384 394,g373 378 384 390,g362 371 380 381,g344 353 372 374,r351 353 358 370,g342 344 358 364,
r342 344 354 367,g331 344 354 354,g339 341 346 349,g295 302 342 342,r298 302 335 345,g326 331 335 343,g327 329 332 343,r322 329 337 339,r331 336 351 352,g332 337 351 355,
g328 334 337 346,r331 335 338 345,g330 336 338 342,r333 336 360 360,r348 359 362 362,r359 361 410 410,r407 409 422 423,r418 421 436 441,r428 435 438 440,g413 428 437 437,
g402 403 428 432,r398 403 414 414,r410 413 422 426,r421 421 425 429,r424 425 430 436,r429 429 451 453,r451 451 466 469,g462 462 466 475,r453 462 469 473,g455 457 469 476,
r456 458 460 464,r458 459 466 469,g453 465 466 471,r459 464 487 487,g476 481 487 491,r474 481 512 514,g492 495 511 511,r474 495 505 509,g497 499 505 515,r492 499 505 510,
g480 485 505 506,r485 485 503 507,r502 503 515 533,g479 480 516 518,r478 480 533 541,g509 509 533 535,g490 504 509 509,g499 501 505 513,g491 494 502 503,r487 494 501 512,
r498 500 515 515,g502 503 515 522,g487 493 503 505,r489 492 511 513,g481 482 512 516,g462 468 483 485,g438 446 468 471,g404 414 447 448,r402 414 434 434,r419 433 436 446,
g389 391 435 435,r390 391 433 442,g411 424 433 434,g416 422 423 436,g404 409 422 426,r402 410 411 416,g385 394 412 414,g389 391 395 402,g363 381 392 394,r379 381 418 420,
g368 370 417 417,r365 370 388 391,r362 387 412 413,g408 409 412 428,g374 383 409 420,g369 382 384 394,r352 382 394 395,g375 375 394 397,g342 353 376 378,g319 321 355 365,
r318 321 345 345,r326 344 360 367,g346 357 360 371,g342 345 357 374,g336 344 346 370,r343 343 363 374,r361 363 385 390,r383 383 433 436,r428 432 468 469,r456 467 488 492,
g466 474 488 505,g467 469 473 486,r465 468 475 495`;

// Signal arrows: x centre and tip.
const SELL_ARROWS = [[337,110],[409,124],[433,132],[665,310],[624,364],[633,364],[729,248],[865,304],[1025,317],[1249,379],[1241,409],[1257,405],[1281,370],[1329,317],[189,343],[157,387],[85,401],[53,416]];
const BUY_ARROWS = [[381,216],[473,343],[501,370],[581,426],[781,300],[817,451],[913,347],[965,415],[1089,421],[1165,512],[125,454]];

const SALMON = '#fa8072';
const GREEN = '#98fb98';
// Price tags: text, box top, tick y, colour.
const TAGS = [
  ['1.87489', 113, 119, SALMON], ['1.87511', 106, 112, SALMON], ['1.87097', 243, 249, SALMON],
  ['1.86885', 313, 319, SALMON], ['1.86812', 338, 344, SALMON], ['1.86817', 335, 341, SALMON],
  ['1.86421', 467, 473, GREEN], ['1.86311', 503, 509, GREEN]
];
const TIMES = ['29 Dec 2023', '29 Dec 08:45', '29 Dec 10:05', '29 Dec 11:25', '29 Dec 12:45', '29 Dec 14:05', '29 Dec 15:25', '29 Dec 16:45', '29 Dec 18:05', '29 Dec 19:25', '29 Dec 20:45', '29 Dec 22:05', '29 Dec 23:25', '2 Jan 00:45', '2 Jan 02:05', '2 Jan 03:25', '2 Jan 04:45', '2 Jan 06:05', '2 Jan 07:25', '2 Jan 08:45', '2 Jan 10:05', '2 Jan 11:25'];

const paths = { g: '', r: '' };
CANDLES.trim().split(/,\s*/).forEach((row, i) => {
  const [high, top, bottom, low] = row.slice(1).split(' ').map(Number);
  const x = 5 + 4 * i;
  paths[row[0]] += `M${x} ${high}h1V${low}h-1zM${x - 1} ${top}h3V${Math.max(bottom, top + 1)}h-3z`;
});
document.getElementById('candles').innerHTML =
  `<path fill="#0f0" d="${paths.g}"/><path fill="#f00" d="${paths.r}"/>`;

const down = SELL_ARROWS.map(([x, y]) => `M${x - 5} ${y - 24}h10v16h5L${x} ${y}l-10-8h5z`).join('');
const up = BUY_ARROWS.map(([x, y]) => `M${x - 5} ${y + 24}h10V${y + 9}h5L${x} ${y}l-10 9h5z`).join('');
document.getElementById('arrows').innerHTML = `<path stroke="#f00000" d="${down}"/><path stroke="#007000" d="${up}"/>`;

let axes = '';
for (let k = 0; k < 15; k++) {
  const y = Math.round(85 + 33.17 * k);
  axes += `<path d="M1553 ${y + .5}h3" stroke="#fff"/><text class="chart-text" x="1558" y="${y + 4}">${(1.8759 - k / 1000).toFixed(5)}</text>`;
}
[['100', 566], ['80', 584], ['20', 655], ['0', 672]].forEach(([t, y]) => {
  axes += `<text class="chart-text" x="1555" y="${y}">${t}</text>`;
});
TIMES.forEach((t, k) => {
  axes += `<path d="M${5.5 + 64 * k} 676v3" stroke="#fff"/><text class="chart-text" x="${4 + 64 * k}" y="688">${t}</text>`;
});
TAGS.forEach(([t, top, tick, color]) => {
  axes += `<path d="M1374 ${tick + .5}h10" stroke="${color}"/><rect x="1384.500" y="${top + .5}" width="41" height="12" fill="#000" stroke="${color}"/><text class="tag-text" x="1386" y="${top + 11}" fill="${color}">${t}</text>`;
});
axes += '<rect x="1554" y="465" width="41" height="6" fill="#ff0"/><rect x="1554" y="469" width="41" height="11" fill="#fff"/><text class="chart-text" x="1558" y="478" style="fill:#000">1.86416</text>';
document.getElementById('axes').innerHTML = axes;
```
